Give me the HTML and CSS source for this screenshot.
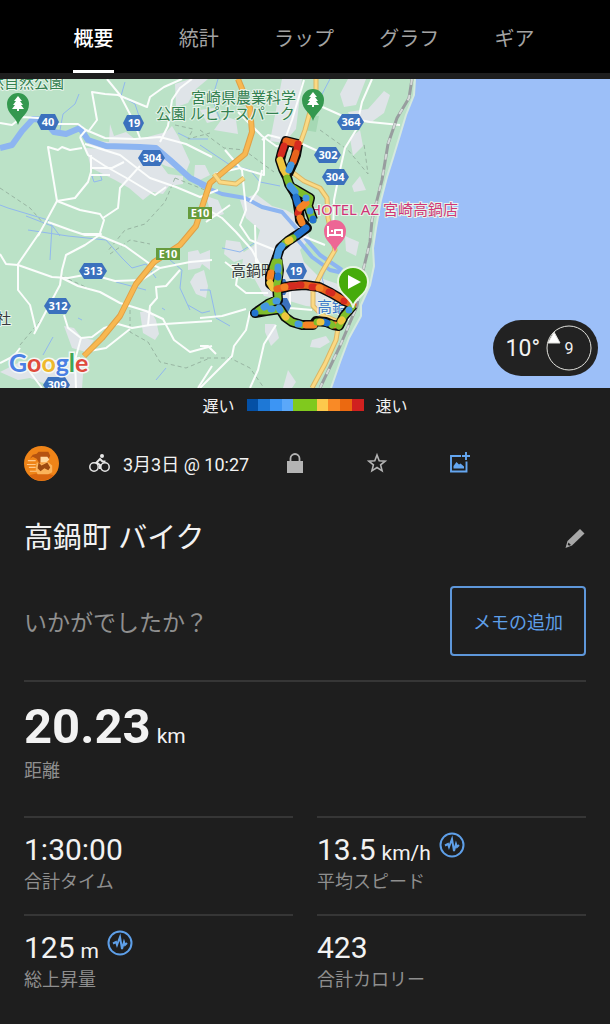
FILE: index.html
```html
<!DOCTYPE html>
<html lang="ja">
<head>
  <meta charset="UTF-8" />
  <meta name="viewport" content="width=device-width, initial-scale=1.0" />
  <title>高鍋町 バイク</title>
  <link rel="stylesheet" href="styles.css">
</head>
<body>

<nav class="tabs">
  <a class="tab active" href="#overview">概要</a>
  <a class="tab" href="#stats">統計</a>
  <a class="tab" href="#laps">ラップ</a>
  <a class="tab" href="#charts">グラフ</a>
  <a class="tab" href="#gear">ギア</a>
</nav>

<main id="overview">
  <section class="map">
    <svg class="map-canvas" viewBox="0 79 610 309" role="img" aria-label="ルートの地図">
      <rect class="land" x="0" y="79" width="610" height="309" />

      <!-- zonas urbanas -->
      <g class="urban">
        <path d="M85 140l24 2 1-18 4 12 12-4 10 8 30-8 6-6 6 10 12 26-4 10-20-6-22-10-30-2-24-8z" />
        <path d="M86 148l40 2 30 8 12 16 15 2v8l-14 2-6 8-10-2-10 8-14-12-14-8-24-12z" />
        <path d="M175 84l15-5 18 0-12 10-8 14-12 4z" />
        <path d="M195 165l10 0 5 10-12 6-4-4zM200 110l14-2 5 12-12 3z" />
        <path d="M188 252l10-2 2 4 10-4v20l-8-6-2 4-12 2zM195 274l9-4 4 16-2 12-10-4-6-12z" />
        <path d="M140 312l10-2 6 10 3 14-4 6-12-7z" />
        <path d="M64 326l10 2 8 10 12 2-8 12-14-4zM0 372l20-10 40-2 24 2-2 26H56L30 378l-12 2z" />
        <path d="M240 200l16-6 16 12 14 4 14 8 10 20-10 12 4 12 16 16 18 6 4 18-2 12-14-6-20-2-20-6-22-4-10-18-12-12 2-14 12-8 4-14-14-12z" />
        <path d="M282 79h20l-6 50-12 14-14-2zM214 130l10-14 12 4 2 14zM350 138l10-8 3 16-10 10zM352 186l8-10 6 14-12 2zM340 94l8-15h18l-10 26-12 2z" />
        <path d="M206 196l12 4 6 14-12 4zM226 240l14 2 6 16-12 4-10-8zM312 340l14-4 4 6-10 6-10-1zM265 324l10 0 4 14-8 8-6-14zM288 370l8 12-4 6h-9z" />
        <path d="M345 236l14 6-3 14-10-5zM348 112l20-3 16-18 6 4-6 18-14 10-18-2z" />
      </g>
      <path class="shade" d="M307 115l12 1-3 16-12-2z" />

      <path class="sea" d="M415 79L414 95L406 115L400 135L393 158L387 177L381 200L376 228L373 248L374 266L370 285L361 305L361 316L349 338L340 362L331 388H610V79z" />
      <path class="coast" d="M415 79L414 95L406 115L400 135L393 158L387 177L381 200L376 228L373 248L374 266L370 285L361 305L361 316L349 338L340 362L331 388" />

      <!-- ríos y arroyos -->
      <g class="stream">
        <path d="M22 79l5 10M60 130l3-16 12-10 4-10M125 82l-4 14 14 8 4 12M178 133l12 6 18 0M60 236l-12-16-40-12-8-3M50 260l2-34-26-10M28 230l40 6 38 4 16 18 10 10 14-4 10 14M116 282l30 8M170 260l12 10-2 18 10 22M43 355l10-18M188 305l14 8 8-2M156 380l10-12M200 145l30 20 20 5 10 12 20 4M218 79l-6 20 8 20M200 290l10 0 6 28 14 8M222 248l18 4 16-10M320 98l10-19M330 260l-8 18 4 14" />
        <path d="M92 176l8-2 2 6-8 2zM78 318l4 2M162 308l3 2" />
      </g>
      <path class="river" d="M0 148L12 145L22 131L33 119L44 120L54 132L66 134L80 128L88 140L106 146L140 147L156 148L170 160L190 178L208 187" />
      <path class="river thin" d="M200 185L222 194L245 198L262 207L282 212L297 229M298 240L312 257L330 270L356 276M305 238L320 255L342 270" />

      <!-- caminos -->
      <g class="trail">
        <path d="M175 125l18 4-5 10 22-6M175 178l-10 24-20 22-20 6-18 22M175 178l30 12M0 188l30 20 14 16M62 276l30 14M130 310v22l18 10 12 20 26 6 24-10M20 345l20-24M200 130l24 18 20 2 30 22M320 130l28 20 20 24-4-30M200 358l30 0 20 10 14 20M110 254l20-14 20 4" />
      </g>

      <!-- carreteras secundarias -->
      <g class="road">
        <path d="M0 123L12 125L22 117L38 118L58 124L78 124L86 130L105 138L135 139L160 137L186 144L212 157" />
        <path d="M88 132L97 120L92 92L105 94L118 95L130 100L147 107L150 97L164 87L182 79" />
        <path d="M107 79L120 95L133 120L140 138M80 137L88 155L105 166L130 180L155 195L166 187" />
        <path d="M80 137L86 130M85 144L120 155L150 178L176 187L200 197L218 190" />
        <path d="M82 148L70 150L62 147L58 150L48 147L57 201L38 236M57 201L75 198L88 182L91 172L91 155" />
        <path d="M57 201L80 210L100 214L104 220L100 233M103 218L118 208L120 188L140 166M91 168L112 168L124 162M91 175L110 175" />
        <path d="M48 222L70 230L85 235L98 235M160 142L168 126L172 100L180 88L192 79" />
        <path d="M0 254L6 264L18 265L52 277L68 278L90 274L115 281L142 280L160 268L190 262L212 260" />
        <path d="M40 232L18 264L18 290L30 305L36 330M34 334L52 300L60 285L62 270L66 255L85 245L101 234L82 234" />
        <path d="M62 278L78 286L100 292L120 303L146 311L163 319L174 340L190 352L212 346" />
        <path d="M98 235L125 246L150 264L160 268M118 324L132 328L150 325L180 323L212 321" />
        <path d="M64 315L68 328L81 338L75 360L76 388M81 338L92 337L104 328L118 324M84 352L106 348L130 329M0 363L14 356L20 348" />
        <path d="M148 325L150 306L157 298L156 287L166 286L180 270M212 366L198 388M28 370L50 362L80 358M30 372L42 388" />
        <path d="M238 112L262 136L276 146L298 150M264 137L264 175L240 168L214 174M262 140L268 135L280 138M304 80L292 120L284 142" />
        <path d="M318 105L345 117L370 122L400 125M372 79L362 102L356 130L345 148L340 170L334 200L333 235M298 142L320 152" />
        <path d="M225 150L242 170L246 210L240 225L250 240L275 250M200 205L222 218L236 232L252 250L265 275M262 170L258 190L250 202M206 222L230 205" />
        <path d="M225 262L238 272L236 285L246 293L268 293M255 225L256 262L270 270M265 310L250 312L246 330L234 346L232 356L200 388M276 325L264 344L258 370L250 388" />
        <path d="M200 346L208 346L216 354M200 318L222 316L246 309M290 288L290 308L312 310M300 235L325 245M365 288L353 306L348 320" />
      </g>

      <!-- autopista y ruta nacional -->
      <path class="highway-edge" d="M238 79L250 108L252 132L245 154L228 168L210 183L203 204L196 226L180 245L154 262L136 284L120 316L102 338L84 356" />
      <path class="highway" d="M238 79L250 108L252 132L245 154L228 168L210 183L203 204L196 226L180 245L154 262L136 284L120 316L102 338L84 356" />
      <path class="national-edge" d="M316 79V90L305 130L297 152L292 172L304 181L320 188L327 198L328 218L335 250L322 272L313 290L313 306L322 315L339 322L336 340L325 364L312 388M214 174L220 182L236 184L244 178" />
      <path class="national" d="M316 79V90L305 130L297 152L292 172L304 181L320 188L327 198L328 218L335 250L322 272L313 290L313 306L322 315L339 322L336 340L325 364L312 388M214 174L220 182L236 184L244 178" />

      <path class="rail" d="M412 79L409 98L397 118L388 144L382 180L372 220L370 242L362 275L357 306L340 346L320 388" />
      <path class="rail-dash" d="M412 79L409 98L397 118L388 144L382 180L372 220L370 242L362 275L357 306L340 346L320 388" />

      <!-- números de ruta -->
      <g class="shield">
        <path d="M37 122l4-8h14l4 8-4 8H41z" />
        <path d="M123 123l4-8h13l4 8-4 8h-13z" />
        <path d="M138 158l5-8h17l5 8-5 8h-17z" />
        <path d="M337 122l5-8h17l5 8-5 8h-17z" />
        <path d="M314 155l5-8h17l5 8-5 8h-17z" />
        <path d="M322 177l5-8h17l5 8-5 8h-17z" />
        <path d="M79 271l5-8h18l5 8-5 8H84z" />
        <path d="M44 306l5-8h17l5 8-5 8H49z" />
        <path d="M43 385l5-8h17l5 8-5 8H48z" />
        <path d="M286 271l4-8h13l4 8-4 8h-13z" />
        <path d="M270 287l4-8h11l4 8-4 8h-11zM270 306l4-8h13l4 8-4 8h-13z" />
        <text x="48" y="126">40</text>
        <text x="134" y="127">19</text>
        <text x="152" y="162">304</text>
        <text x="351" y="126">364</text>
        <text x="328" y="159">302</text>
        <text x="335" y="181">304</text>
        <text x="93" y="275">313</text>
        <text x="58" y="310">312</text>
        <text x="57" y="389">309</text>
        <text x="296" y="275">19</text>
      </g>
      <g class="expressway">
        <rect x="188" y="207" width="24" height="12" />
        <rect x="156" y="248" width="24" height="12" />
        <text x="200" y="217">E10</text>
        <text x="168" y="258">E10</text>
      </g>

      <!-- lugares -->
      <g class="label park">
        <text x="-11" y="88">然自然公園</text>
        <text x="191" y="103">宮崎県農業科学</text>
        <text x="156" y="119">公園 ルピナスパーク</text>
      </g>
      <text class="label hotel" x="310" y="215">HOTEL AZ 宮崎高鍋店</text>
      <text class="label town" x="231" y="276">高鍋町</text>
      <text class="label station" x="317" y="312">高鍋</text>
      <text class="label town" x="-4" y="324">社</text>

      <g class="pin-park">
        <path d="M18 125c-2-8-11-11-11-21a11 11 0 0 1 22 0c0 10-9 13-11 21z" />
        <path d="M313 121c-2-8-11-11-11-21a11 11 0 0 1 22 0c0 10-9 13-11 21z" />
        <path class="tree" d="M18 96l4 5h-2l3 4h-2l3 4h-5v2h-2v-2h-5l3-4h-2l3-4h-2zM313 92l4 5h-2l3 4h-2l3 4h-5v2h-2v-2h-5l3-4h-2l3-4h-2z" />
      </g>
      <g class="pin-hotel">
        <path d="M335 252c-2-8-11-11-11-21a11 11 0 0 1 22 0c0 10-9 13-11 21z" />
        <path class="bed" d="M328 226v11M328 235h14v2M342 235v-5h-7v4M331 231h2" />
      </g>

      <!-- recorrido coloreado por velocidad -->
      <path class="track-edge" d="M298 144L286 141L282 152L280 160L283 169L287 177L289 184L294 192L297 199L299 211L300 220L307 228L297 235L288 241L280 248L277 257L273 268L270 276L270 284L277 289L291 286L305 285L319 287L331 293L343 300L353 305M298 144L296 155L293 163L288 174M291 187L298 191L310 198L308 206L313 220M311 199L300 208M277 257L279 270L277 284L278 300L268 304L255 313L266 311L280 309L285 317L292 322L302 325L313 325L316 321L326 322L333 325L339 326L344 316L353 305" />
      <g class="track">
        <path class="s-amber" d="M298 144L286 141" />
        <path class="s-red" d="M284 146L281 155M298 144L297 149" />
        <path class="s-yellow" d="M280 160L283 169L286 174" />
        <path class="s-amber" d="M296 153L293 162" />
        <path class="s-sky" d="M291 165L289 170" />
        <path class="s-green" d="M287 178L290 186L298 191L310 198L308 206L313 220" />
        <path class="s-sky" d="M290 186L295 192" />
        <path class="s-blue" d="M296 197L298 204" />
        <path class="s-red" d="M299 210L298 213" />
        <path class="s-orange" d="M306 203L300 208M300 218L302 223" />
        <path class="s-blue" d="M306 228L297 235M313 219L313 220" />
        <path class="s-sky" d="M306 198L306 198M310 211L310 211" />
        <path class="s-green" d="M293 238L285 243" />
        <path class="s-yellow" d="M290 240L288 241" />
        <path class="s-sky" d="M282 246L279 250L277 258" />
        <path class="s-green" d="M275 262L273 268" />
        <path class="s-orange" d="M271 273L270 278" />
        <path class="s-yellow" d="M270 283L273 288" />
        <path class="s-green" d="M279 262L279 274L277 284L278 299L268 304L258 311L266 311L280 309L285 317L292 322L302 325" />
        <path class="s-sky" d="M278 267V270M264 307L266 306M276 301L277 301M279 308L280 310M271 309L272 309" />
        <path class="s-blue" d="M255 313L255 313M278 276L278 277" />
        <path class="s-amber" d="M277 289L291 286L305 285L319 287L331 293L343 300L353 305" />
        <path class="s-red" d="M289 286L294 286M299 285L301 285M312 287L314 287M329 292L332 293M344 301L344 301" />
        <path class="s-orange" d="M306 325L314 325M334 325L335 325M284 287L285 287M319 288L320 288" />
        <path class="s-green" d="M317 322L319 322M331 324L332 325M339 326L344 316L352 307" />
        <path class="s-blue" d="M324 322L327 323" />
        <path class="s-sky" d="M298 324L299 324M349 310L349 310" />
        <path class="s-yellow" d="M285 316L286 317M320 322L321 322M341 321L342 320" />
      </g>

      <g class="pin-start">
        <path d="M353 307c-2-10-15-12-15-25a15 15 0 0 1 30 0c0 13-13 15-15 25z" />
        <path class="play" d="M348 275l13 7-13 7z" />
      </g>

      <text class="google" x="9" y="372"><tspan class="g-blue">G</tspan><tspan class="g-red">o</tspan><tspan class="g-yellow">o</tspan><tspan class="g-blue">g</tspan><tspan class="g-green">l</tspan><tspan class="g-red">e</tspan></text>
    </svg>

    <div class="weather">
      <span class="temp">10°</span>
      <span class="wind">
        <svg class="wind-dial" viewBox="0 0 46 46" aria-hidden="true">
          <circle cx="23" cy="23" r="22" />
          <path d="M2 18L8 7L14 18z" />
        </svg>
        <span class="wind-speed">9</span>
      </span>
    </div>
  </section>

  <div class="legend">
    <span>遅い</span>
    <div class="scale">
      <i class="c-deep"></i><i class="c-blue"></i><i class="c-sky"></i><i class="c-light"></i><i class="c-green"></i><i class="c-yellow"></i><i class="c-orange"></i><i class="c-amber"></i><i class="c-red"></i>
    </div>
    <span>速い</span>
  </div>

  <section class="content">
    <div class="meta">
      <svg class="avatar" viewBox="0 0 36 36" aria-hidden="true">
        <circle cx="18" cy="18" r="18" fill="#ef8418" />
        <path d="M5 30q13-4 26 0a18 18 0 0 1-26 0z" fill="#d9660f" />
        <path d="M6 13l3-4 4-1 2-2h10l2 4-2 4-7 1-2 3-3-5-4-2z" fill="#b55310" />
        <path d="M17 11h7l2 3-3 3h-6z" fill="#ffd9a0" />
        <path d="M13 17l6 1 5-2 5 4v7l-4 2H14l-2-4z" fill="#fbb35a" />
        <path d="M15 17l3 3 6-3 3 5-2 3-4-2-4 3-3-3z" fill="#9c4a10" />
        <path d="M4 15h8M3 19h9M5 22h7M6 26h7" stroke="#ffc98a" stroke-width="1.2" />
      </svg>
      <svg class="bike" viewBox="0 0 21 20" aria-hidden="true">
        <circle cx="5" cy="14" r="4.200" />
        <circle cx="16" cy="14" r="4.200" />
        <circle class="fill" cx="13" cy="3" r="2" />
        <path class="rider" d="M16.500 8.500h-3L11 6 7.500 9.500l3.500 2.500v4" />
      </svg>
      <time class="date">3月3日 @ 10:27</time>
      <div class="actions">
        <button class="icon-button" aria-label="プライバシー">
          <svg viewBox="0 0 22 22"><path d="M3 9h16v12H3z" fill="#b4b4b4" /><path d="M6.500 9V6.500a4.500 4.500 0 0 1 9 0V9" fill="none" stroke="#b4b4b4" stroke-width="1.800" /></svg>
        </button>
        <button class="icon-button" aria-label="お気に入り">
          <svg viewBox="0 0 22 22"><path d="M11 3l2.200 5.700 6 .400-4.600 3.800 1.500 5.900L11 15.500l-5.100 3.300 1.500-5.900L2.800 9.100l6-.400z" fill="none" stroke="#b4b4b4" stroke-width="1.600" /></svg>
        </button>
        <button class="icon-button" aria-label="写真の追加">
          <svg viewBox="0 0 22 22"><path d="M13 4H3v15.500h15.500V9.500M18 0v8M14 4h8" fill="none" stroke="#64a6f0" stroke-width="1.900" /><path d="M5.500 16.500v-2.500l3-4 2.500 2.500 1.500-1 3.500 3v2z" fill="#64a6f0" /></svg>
        </button>
      </div>
    </div>

    <div class="title-row">
      <h1>高鍋町 バイク</h1>
      <button class="icon-button" aria-label="編集">
        <svg viewBox="0 0 22 22"><path d="M16 2l4.500 4.500L8 18.500 1.500 21l2-7z" fill="#a8a8a8" /><path d="M4.500 15.500l2.500 2.500-2 .8-1.300-1.300z" fill="#1e1e1e" /></svg>
      </button>
    </div>

    <div class="memo-row">
      <p>いかがでしたか？</p>
      <button class="memo-button">メモの追加</button>
    </div>

    <div class="distance">
      <p class="value">20.23<span class="unit">km</span></p>
      <p class="name">距離</p>
    </div>

    <div class="stats" id="stats">
      <div class="stat">
        <p class="value">1:30:00</p>
        <p class="name">合計タイム</p>
      </div>
      <div class="stat">
        <p class="value">13.5<span class="unit">km/h</span>
          <a class="chart-link" href="#charts" aria-label="平均スピードのグラフ"><svg viewBox="0 0 26 26"><circle cx="13" cy="13" r="11.500" /><path d="M6 13.500l3-1.500 1 3 3-8 2 12 2-7 1 3 2-2" /></svg></a>
        </p>
        <p class="name">平均スピード</p>
      </div>
      <div class="stat">
        <p class="value">125<span class="unit">m</span>
          <a class="chart-link" href="#charts" aria-label="総上昇量のグラフ"><svg viewBox="0 0 26 26"><circle cx="13" cy="13" r="11.500" /><path d="M6 13.500l3-1.500 1 3 3-8 2 12 2-7 1 3 2-2" /></svg></a>
        </p>
        <p class="name">総上昇量</p>
      </div>
      <div class="stat">
        <p class="value">423</p>
        <p class="name">合計カロリー</p>
      </div>
    </div>
  </section>
</main>

</body>
</html>
```
FILE: styles.css
```css
* {
  box-sizing: border-box;
}

body {
  font-family: Roboto, "Noto Sans CJK JP", sans-serif;
  margin: 0;
  background: #1e1e1e;
  color: #f2f2f2;
}

p,
h1 {
  margin: 0;
}

button {
  font-family: inherit;
  background: none;
  border: none;
  padding: 0;
  cursor: pointer;
}

svg {
  display: block;
}

/* Tabs */
.tabs {
  display: flex;
  background: #000;
  padding: 0 43px 0 41px;
  border-bottom: 6px solid #1e1e1e;
}

.tab {
  flex: 1;
  display: flex;
  flex-direction: column;
  align-items: center;
  justify-content: space-between;
  height: 73px;
  padding-top: 24px;
  color: #a3a3a3;
  font-size: 20px;
  line-height: 30px;
  text-decoration: none;
}

.tab.active {
  color: #fff;
  font-weight: 500;
}

.tab.active::after {
  content: "";
  width: 41px;
  height: 3px;
  background: #fff;
}

/* Map */
.map {
  position: relative;
}

.map-canvas {
  width: 100%;
  height: auto;
}

.map-canvas path {
  stroke-linejoin: round;
}

.land { fill: #bbe2c7; }
.urban { fill: #dfe4e8; }
.shade { fill: #a5d8b4; }
.sea { fill: #9cbff8; }

.coast {
  fill: none;
  stroke: #d5e9de;
  stroke-width: 2;
}

.stream {
  fill: none;
  stroke: #91b8ee;
  stroke-width: 1;
}

.river {
  fill: none;
  stroke: #8db5f1;
  stroke-width: 6;
}

.river.thin {
  stroke-width: 4;
}

.trail {
  fill: none;
  stroke: #98b5a2;
  stroke-width: 1;
  stroke-dasharray: 4 3;
}

.road {
  fill: none;
  stroke: #fbfdfc;
  stroke-width: 2;
}

.highway-edge,
.highway,
.national-edge,
.national,
.rail,
.rail-dash {
  fill: none;
}

.highway-edge { stroke: #e0a046; stroke-width: 6; }
.highway { stroke: #f8b851; stroke-width: 4; }
.national-edge { stroke: #d9b666; stroke-width: 5; }
.national { stroke: #fbd983; stroke-width: 3; }
.rail { stroke: #989d9f; stroke-width: 3; }
.rail-dash { stroke: #d5dad9; stroke-width: 2; stroke-dasharray: 6 10; }

.shield path { fill: #3b71bd; }

.shield text,
.expressway text {
  fill: #fff;
  font-family: "Noto Sans", sans-serif;
  font-size: 11px;
  font-weight: 700;
  text-anchor: middle;
}

.expressway rect { fill: #669b3d; }

.label {
  font-size: 15px;
  paint-order: stroke;
  stroke: #e6f3ea;
  stroke-width: 2px;
}

.park { fill: #33804f; }
.town { fill: #35393c; }
.station { fill: #3b78c9; }

.hotel {
  fill: #cf3677;
  font-family: "Noto Sans", "Noto Sans CJK JP", sans-serif;
}

.pin-park { fill: #34984f; }
.pin-park .tree { fill: #fff; }
.pin-hotel { fill: #ed6695; }

.pin-hotel .bed {
  fill: none;
  stroke: #fff;
  stroke-width: 2;
}

.track-edge {
  fill: none;
  stroke: #0b0b0b;
  stroke-width: 10;
}

.track {
  fill: none;
  stroke-width: 7;
  stroke-linecap: round;
}

.s-blue { stroke: #2273cf; }
.s-sky { stroke: #4598e0; }
.s-green { stroke: #7fbe2c; }
.s-yellow { stroke: #efc53e; }
.s-orange { stroke: #f58426; }
.s-amber { stroke: #e8641d; }
.s-red { stroke: #d52b20; }

.pin-start {
  fill: #46ab0b;
  stroke: #e9f5e4;
  stroke-width: 2;
}

.pin-start .play {
  fill: #fff;
  stroke: none;
}

.google {
  font-family: Lato, sans-serif;
  font-size: 25px;
  font-weight: 700;
  paint-order: stroke;
  stroke: #f4f8f6;
  stroke-width: 3px;
}

.g-blue { fill: #4a80e4; }
.g-red { fill: #df4a3c; }
.g-yellow { fill: #efb92d; }
.g-green { fill: #3da756; }

.weather {
  position: absolute;
  right: 12px;
  bottom: 12px;
  display: flex;
  align-items: center;
  gap: 6px;
  padding: 5px 6px 5px 13px;
  border-radius: 28px;
  background: #222;
}

.temp {
  font-size: 23px;
}

.wind {
  display: grid;
  place-items: center;
}

.wind-dial,
.wind-speed {
  grid-area: 1 / 1;
}

.wind-dial {
  width: 46px;
  height: 46px;
  fill: none;
  stroke: #e2e2dd;
  stroke-width: 1;
}

.wind-dial path {
  fill: #fff;
}

.wind-speed {
  font-size: 16px;
}

/* Legend */
.legend {
  display: flex;
  justify-content: center;
  align-items: center;
  gap: 12px;
  height: 34px;
  font-size: 16px;
}

.scale {
  display: flex;
  width: 117px;
  height: 12px;
}

.scale i {
  flex: 1;
}

.scale .c-green {
  flex: 2;
}

.c-deep { background: #0450a5; }
.c-blue { background: #1e78d6; }
.c-sky { background: #3c95f4; }
.c-light { background: #5ba8fa; }
.c-green { background: #80c91e; }
.c-yellow { background: #fdc94c; }
.c-orange { background: #f98a26; }
.c-amber { background: #eb6910; }
.c-red { background: #d0211f; }

/* Activity */
.content {
  padding: 0 24px;
}

.meta {
  display: flex;
  align-items: center;
  height: 82px;
}

.avatar {
  width: 35px;
  height: 35px;
}

.bike {
  width: 21px;
  height: 20px;
  margin: 0 13px 0 30px;
  fill: none;
  stroke: #e6e6e6;
  stroke-width: 1.5px;
}

.bike .fill {
  fill: #e6e6e6;
  stroke: none;
}

.bike .rider {
  stroke-width: 2px;
}

.date {
  font-size: 18px;
}

.actions {
  display: flex;
  gap: 60px;
  margin-left: 35px;
}

.icon-button svg {
  width: 22px;
  height: 22px;
}

.title-row {
  display: flex;
  justify-content: space-between;
  align-items: center;
  height: 66px;
}

.title-row h1 {
  font-size: 29px;
  font-weight: 400;
  padding-bottom: 4px;
}

.title-row .icon-button {
  padding-top: 2px;
}

.memo-row {
  display: flex;
  justify-content: space-between;
  align-items: center;
  padding: 16px 0 24px;
  border-bottom: 2px solid #363636;
}

.memo-row p {
  color: #8f8f8f;
  font-size: 23px;
}

.memo-button {
  width: 136px;
  height: 70px;
  border: 2px solid #5e97da;
  border-radius: 4px;
  color: #5e9fe8;
  font-size: 18px;
}

.value {
  display: flex;
  align-items: baseline;
  gap: 6px;
}

.unit {
  font-size: 21px;
  font-weight: 400;
  line-height: 24px;
}

.name {
  color: #8f8f8f;
  font-size: 18px;
  line-height: 27px;
}

.distance {
  padding: 15px 0 32px;
}

.distance .value {
  font-size: 49px;
  font-weight: 700;
  line-height: 60px;
}

.stats {
  display: grid;
  grid-template-columns: 1fr 1fr;
  column-gap: 24px;
}

.stat {
  border-top: 2px solid #363636;
  padding: 14px 0 19px;
}

.stat .value {
  height: 36px;
  font-size: 30px;
  line-height: 36px;
}

.chart-link {
  align-self: flex-start;
  margin-left: 2px;
}

.chart-link svg {
  width: 26px;
  height: 26px;
  fill: none;
  stroke: #5e9fe8;
  stroke-width: 2px;
}
```
